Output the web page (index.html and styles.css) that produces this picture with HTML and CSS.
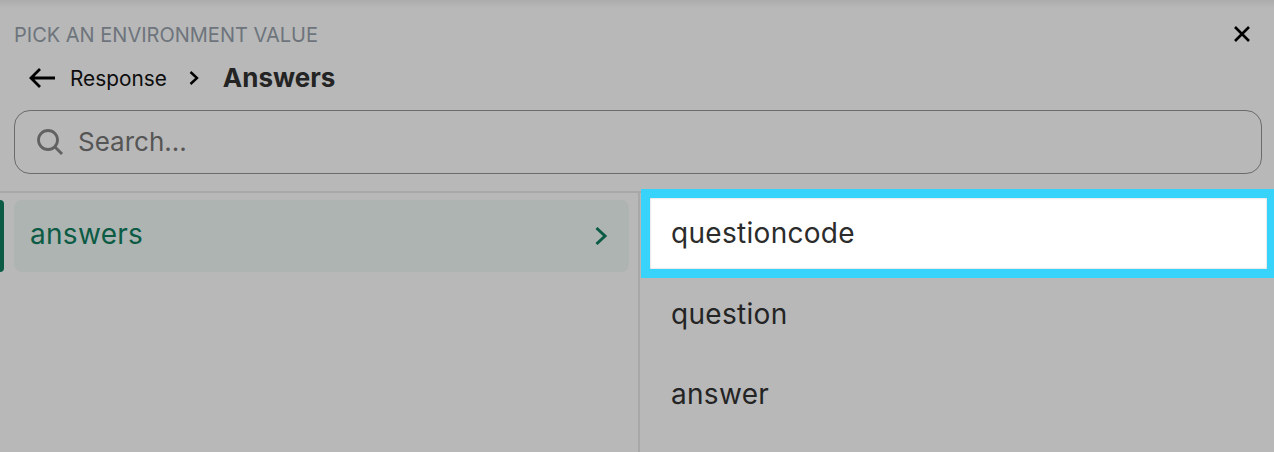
FILE: index.html
```html
<!DOCTYPE html>
<html lang="en">
<head>
<meta charset="utf-8">
<title>Pick an environment value</title>
<link rel="stylesheet" href="styles.css">
</head>
<body>
<div class="panel">
  <header class="head">
    <div class="title-row">
      <span class="title">PICK AN ENVIRONMENT VALUE</span>
      <svg class="close" width="18" height="18" viewBox="0 0 18 18"><path d="M2 2L16 16M16 2L2 16" fill="none" stroke="#000" stroke-width="2.6"/></svg>
    </div>
    <div class="crumbs">
      <svg class="back" width="26" height="22" viewBox="0 0 26 22"><path d="M26 11H2M11 2L2 11L11 20" fill="none" stroke="#000" stroke-width="2.8"/></svg>
      <span class="crumb">Response</span>
      <svg class="sep" width="12" height="16" viewBox="0 0 12 16"><path d="M2.500 2L9 8L2.500 14" fill="none" stroke="#000" stroke-width="2.400"/></svg>
      <span class="current">Answers</span>
    </div>
    <div class="search">
      <svg width="28" height="28" viewBox="0 0 28 28"><circle cx="12" cy="12" r="9.500" fill="none" stroke="#616161" stroke-width="2.800"/><path d="M19 19L26 26" stroke="#616161" stroke-width="2.800" fill="none"/></svg>
      <span class="placeholder">Search...</span>
    </div>
  </header>
  <div class="columns">
    <div class="left">
      <div class="selected-row">
        <span class="indicator"></span>
        <div class="selected-item">
          <span class="selected-label">answers</span>
          <svg width="14" height="20" viewBox="0 0 14 20"><path d="M2.500 2L11 10L2.500 18" fill="none" stroke="#0b5b45" stroke-width="3"/></svg>
        </div>
      </div>
    </div>
    <div class="right">
      <div class="field focused">questioncode</div>
      <div class="field">question</div>
      <div class="field">answer</div>
    </div>
  </div>
</div>
</body>
</html>
```
FILE: styles.css
```css
* { box-sizing: border-box; }
html, body { margin: 0; height: 100%; }
body {
  background: #b8b8b8;
  font-family: Inter, "Liberation Sans", sans-serif;
  color: #242424;
  overflow: hidden;
}
.panel {
  width: 1274px;
  height: 452px;
  display: flex;
  flex-direction: column;
  background: linear-gradient(#acacac 0, #b8b8b8 8px);
}
.head { padding: 22px 12px 0 14px; }
.title-row {
  display: flex;
  justify-content: space-between;
  align-items: center;
  height: 24px;
  padding-right: 11px;
}
.title { font-size: 20px; color: #6d747c; margin-top: 1px; }
.crumbs {
  display: flex;
  align-items: center;
  height: 40px;
  margin-top: 12px;
  padding-left: 15px;
}
.back { margin-right: 15px; }
.crumb { font-size: 20.8px; color: #0d0d0d; }
.sep { margin: 0 23px 0 21px; }
.current { font-size: 26px; font-weight: 700; color: #242424; margin-bottom: 1px; }
.search {
  display: flex;
  align-items: center;
  gap: 14px;
  height: 64px;
  margin-top: 12px;
  padding-left: 21px;
  border: 1px solid #6b6b6b;
  border-radius: 16px;
}
.placeholder { font-size: 26px; color: #555; margin-bottom: 2px; }
.columns {
  flex: 1;
  display: flex;
  margin-top: 17px;
  border-top: 2px solid #a8a8ab;
}
.left {
  width: 640px;
  flex: none;
  padding: 7px 1px 0 0;
  border-right: 2px solid #a8a8a8;
  margin-right: -1px;
}
.selected-row { display: flex; gap: 10px; padding-right: 8px; }
.indicator {
  width: 4px;
  height: 72px;
  background: #0b5b45;
  border-radius: 0 4px 4px 0;
}
.selected-item {
  flex: 1;
  height: 72px;
  display: flex;
  align-items: center;
  justify-content: space-between;
  padding: 0 21px 0 16px;
  background: #aeb4b1;
  border-radius: 8px;
  font-size: 28px;
  letter-spacing: 0.3px;
  color: #0b5b45;
}
.selected-label { margin-bottom: 5px; }
.right { flex: 1; padding-top: 5px; }
.field {
  height: 72px;
  margin: 0 7px 8px 11px;
  padding: 0 0 1px 21px;
  display: flex;
  align-items: center;
  font-size: 28px;
  letter-spacing: 0.3px;
}
.focused {
  height: 71px;
  margin-bottom: 9px;
  padding-bottom: 2px;
  background: #fff;
  color: #2c2c2c;
  box-shadow: inset 0 0 2px #b8b8b8, 0 0 0 9px #38d3fb;
}
```
